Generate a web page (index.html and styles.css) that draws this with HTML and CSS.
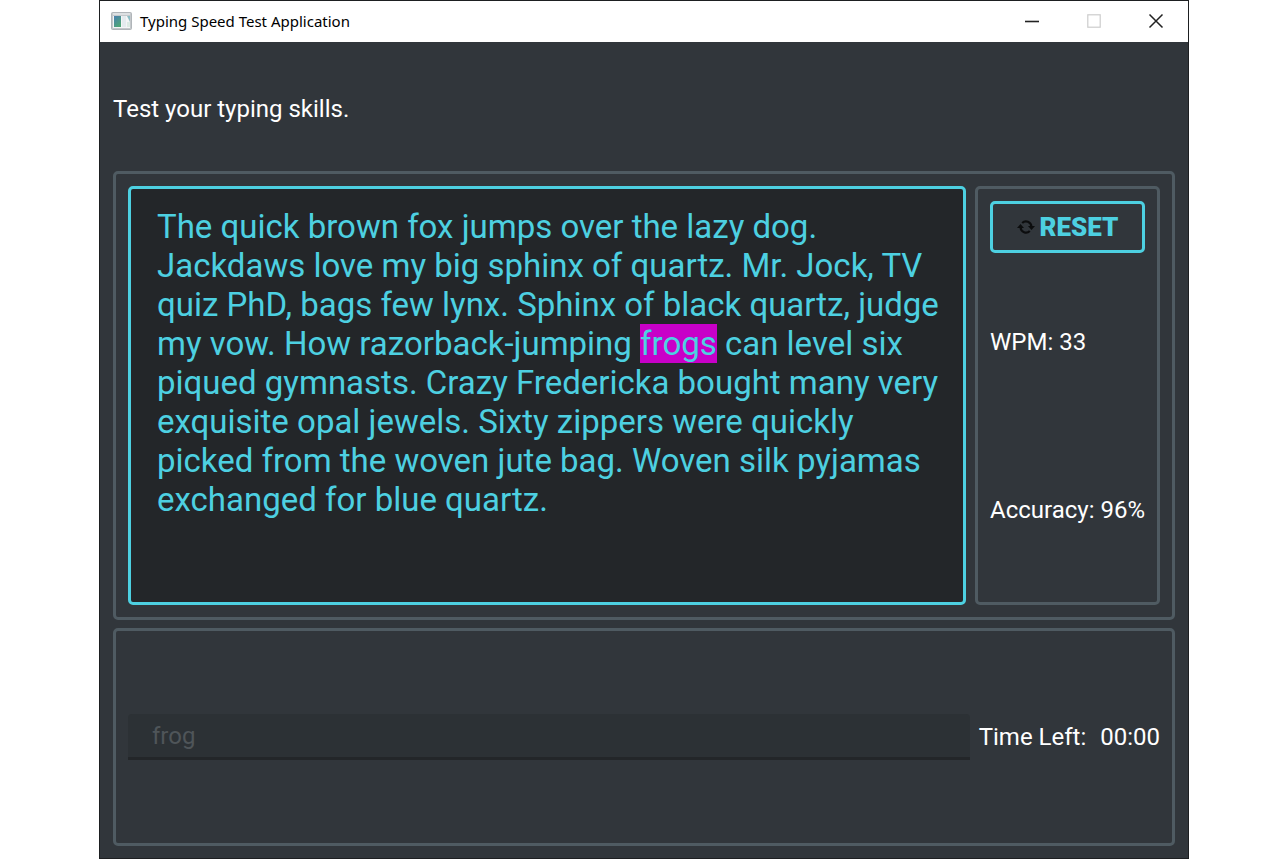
FILE: index.html
```html
<!DOCTYPE html>
<html lang="en">
<head>
<meta charset="utf-8">
<title>Typing Speed Test Application</title>
<link rel="stylesheet" href="styles.css">
</head>
<body>
<div class="window">
  <header class="titlebar">
    <svg class="app-icon" width="21" height="18" viewBox="0 0 21 18" aria-hidden="true">
      <defs>
        <linearGradient id="pane" x1="0" y1="0" x2="0.6" y2="1">
          <stop offset="0" stop-color="#4a7fb0"/>
          <stop offset="1" stop-color="#4fa678"/>
        </linearGradient>
      </defs>
      <rect x="0.5" y="0.5" width="20" height="17" rx="1" fill="#c4c8cb" stroke="#b0b5b9"/>
      <rect x="2" y="1" width="17" height="2" fill="#dde0e2"/>
      <rect x="2" y="4" width="17" height="12" fill="#f4f5f6"/>
      <rect x="3" y="4" width="7" height="11" fill="url(#pane)"/>
      <rect x="11" y="4" width="4" height="11" fill="#e4ebee"/>
      <path d="M16 4h3v6z" fill="#8dbcc4"/>
      <rect x="16" y="10" width="3" height="5" fill="#dceae4"/>
    </svg>
    <h1 class="title">Typing Speed Test Application</h1>
    <div class="window-controls">
      <button class="control" type="button" aria-label="Minimize">
        <svg width="16" height="16" viewBox="0 0 16 16"><path d="M1 8.5h14" stroke="#222" stroke-width="1.6"/></svg>
      </button>
      <button class="control" type="button" aria-label="Maximize" disabled>
        <svg width="16" height="16" viewBox="0 0 16 16"><rect x="1.8" y="1.8" width="12.4" height="12.4" fill="none" stroke="#ccc" stroke-width="1.2"/></svg>
      </button>
      <button class="control" type="button" aria-label="Close">
        <svg width="16" height="16" viewBox="0 0 16 16"><path d="M1.5 1.5l13 13M14.5 1.5l-13 13" stroke="#222" stroke-width="1.5"/></svg>
      </button>
    </div>
  </header>
  <main class="content">
    <p class="intro">Test your typing skills.</p>
    <section class="frame test">
      <p class="passage">The quick brown fox jumps over the lazy dog. Jackdaws love my big sphinx of quartz. Mr. Jock, TV quiz PhD, bags few lynx. Sphinx of black quartz, judge my vow. How razorback-jumping <mark class="current">frogs</mark> can level six piqued gymnasts. Crazy Fredericka bought many very exquisite opal jewels. Sixty zippers were quickly picked from the woven jute bag. Woven silk pyjamas exchanged for blue quartz.</p>
      <aside class="frame stats">
        <button class="reset" type="button">
          <svg width="18" height="14" viewBox="0 0 18 14" aria-hidden="true">
            <path d="M5.2 3A5.4 5.4 0 0 1 14.4 6.5M12.8 11A5.4 5.4 0 0 1 3.6 7.5" fill="none" stroke="#0c0d0e" stroke-width="2.2"/>
            <path d="M11 6h7l-3.5 4zM0 8h7l-3.5-4z" fill="#0c0d0e"/>
          </svg>
          <span>RESET</span>
        </button>
        <p class="stat">WPM: 33</p>
        <p class="stat">Accuracy: 96%</p>
      </aside>
    </section>
    <section class="frame entry">
      <input class="typed" type="text" value="frog" aria-label="Type the text here" disabled>
      <p class="timer"><span>Time Left:</span><span>00:00</span></p>
    </section>
  </main>
</div>
</body>
</html>
```
FILE: styles.css
```css
* {
  box-sizing: border-box;
}

body {
  margin: 0;
  padding: 0 99px;
  background: #fff;
  color: #fff;
  font: 24px/30px Roboto, "Liberation Sans", sans-serif;
}

p {
  margin: 0;
}

.window {
  display: flex;
  flex-direction: column;
  min-height: 100vh;
  border: 1px solid #1d1f21;
  background: #31363b;
}

.titlebar {
  display: flex;
  align-items: center;
  height: 41px;
  padding: 0 1px 2px 11px;
  background: #fff;
  color: #000;
}

.title {
  margin: 0 0 0 8px;
  font: 400 15px/20px "Noto Sans", "Open Sans", sans-serif;
}

.window-controls {
  display: flex;
  margin-left: auto;
}

.control {
  display: flex;
  align-items: center;
  justify-content: center;
  width: 62px;
  height: 38px;
  padding: 0;
  border: 0;
  background: none;
}

.content {
  flex: 1;
  display: grid;
  grid-template-rows: 121fr 449fr 218fr;
  gap: 8px;
  padding: 0 13px 12px;
}

.intro {
  align-self: center;
  padding-top: 12px;
}

.frame {
  border: 3px solid #4f5b62;
  border-radius: 5px;
}

.test {
  display: flex;
  gap: 9px;
  padding: 12px;
}

.passage {
  flex: 1;
  padding: 18px 18px 18px 26px;
  border: 3px solid #4dd0e1;
  border-radius: 5px;
  background: #232629;
  color: #4dd0e1;
  font-size: 33px;
  line-height: 39px;
}

.current {
  background: #c800c8;
  color: inherit;
}

.stats {
  display: flex;
  flex-direction: column;
  gap: 9px;
  padding: 12px;
}

.reset {
  display: flex;
  align-items: center;
  justify-content: center;
  gap: 5px;
  height: 52px;
  padding: 0;
  border: 3px solid #4dd0e1;
  border-radius: 5px;
  background: none;
  color: #4dd0e1;
  font: 900 26px/30px Roboto, "Liberation Sans", sans-serif;
}

.stat {
  flex: 1;
  display: flex;
  align-items: center;
  white-space: nowrap;
}

.entry {
  display: flex;
  align-items: center;
  gap: 9px;
  padding: 12px;
}

.typed {
  flex: 1;
  min-width: 0;
  height: 46px;
  padding: 0 24px;
  border: 0;
  border-bottom: 3px solid #232629;
  border-radius: 4px 4px 0 0;
  background: #2c3135;
  color: #4f5559;
  font: inherit;
}

.timer {
  display: flex;
  gap: 14px;
  white-space: nowrap;
}
```
